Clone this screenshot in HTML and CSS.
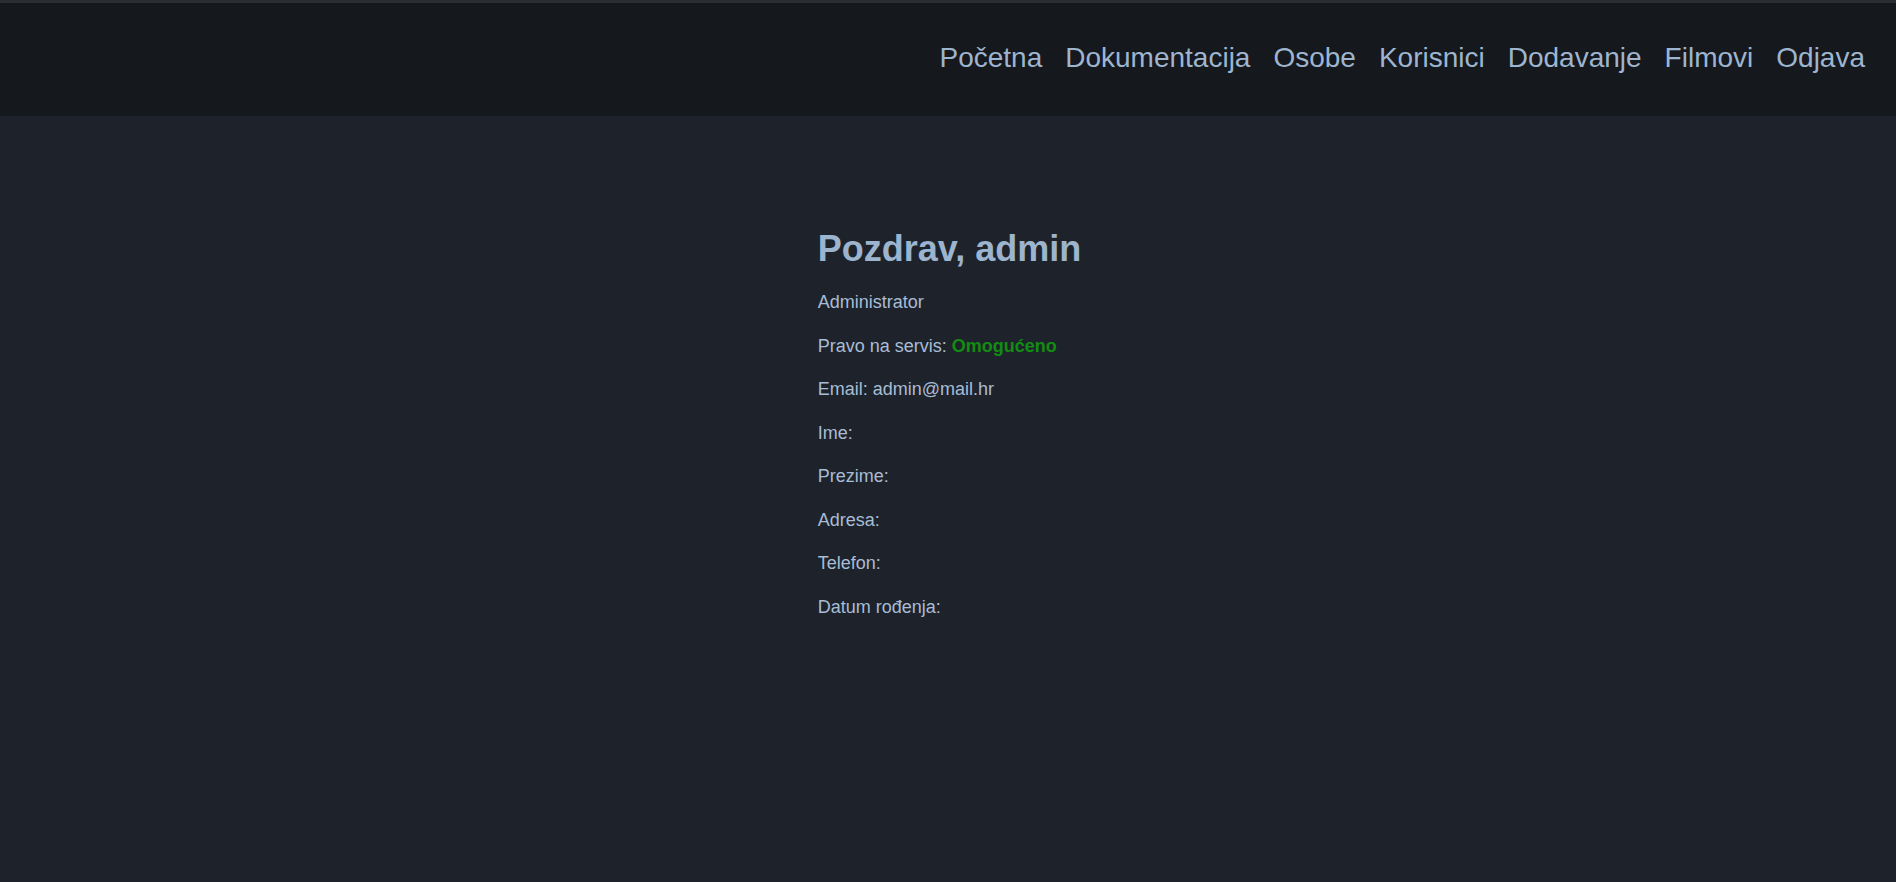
FILE: index.html
```html
<!DOCTYPE html>
<html lang="hr">
<head>
<meta charset="utf-8">
<title>Pozdrav, admin</title>
<link rel="stylesheet" href="styles.css">
</head>
<body>
<header class="topbar">
  <nav class="nav">
    <a href="#" class="nav-link">Početna</a>
    <a href="#" class="nav-link">Dokumentacija</a>
    <a href="#" class="nav-link">Osobe</a>
    <a href="#" class="nav-link">Korisnici</a>
    <a href="#" class="nav-link">Dodavanje</a>
    <a href="#" class="nav-link">Filmovi</a>
    <a href="#" class="nav-link">Odjava</a>
  </nav>
</header>
<main class="main">
  <section class="profile">
    <h1 class="title">Pozdrav, admin</h1>
    <div class="rows">
      <p class="row">Administrator</p>
      <p class="row">Pravo na servis: <span class="ok">Omogućeno</span></p>
      <p class="row">Email: admin@mail.hr</p>
      <p class="row">Ime:</p>
      <p class="row">Prezime:</p>
      <p class="row">Adresa:</p>
      <p class="row">Telefon:</p>
      <p class="row">Datum rođenja:</p>
    </div>
  </section>
</main>
</body>
</html>
```
FILE: styles.css
```css
html, body {
  margin: 0;
  padding: 0;
}
body {
  background: #1e232b;
  font-family: "Liberation Sans", Arial, sans-serif;
  color: #a8bcd5;
  min-height: 100vh;
}
.topbar {
  border-top: 3px solid #2c2d32;
  background: #15181d;
  height: 113px;
  display: flex;
  align-items: center;
  justify-content: flex-end;
  padding-right: 31px;
}
.nav {
  display: flex;
  gap: 23px;
  margin-bottom: 3px;
}
.nav-link {
  font-size: 28px;
  line-height: 32px;
  color: #9db5cf;
  text-decoration: none;
}
.main {
  display: flex;
  justify-content: center;
  padding-top: 111px;
  padding-left: 3px;
}
.profile {
  display: flex;
  flex-direction: column;
}
.title {
  margin: 0 0 19px;
  font-size: 36px;
  line-height: 43.2px;
  font-weight: bold;
  color: #9cb4ce;
}
.rows {
  display: flex;
  flex-direction: column;
  gap: 16.5px;
}
.row {
  margin: 0;
  font-size: 18px;
  line-height: 27px;
}
.ok {
  color: #128c12;
  font-weight: bold;
}
```
